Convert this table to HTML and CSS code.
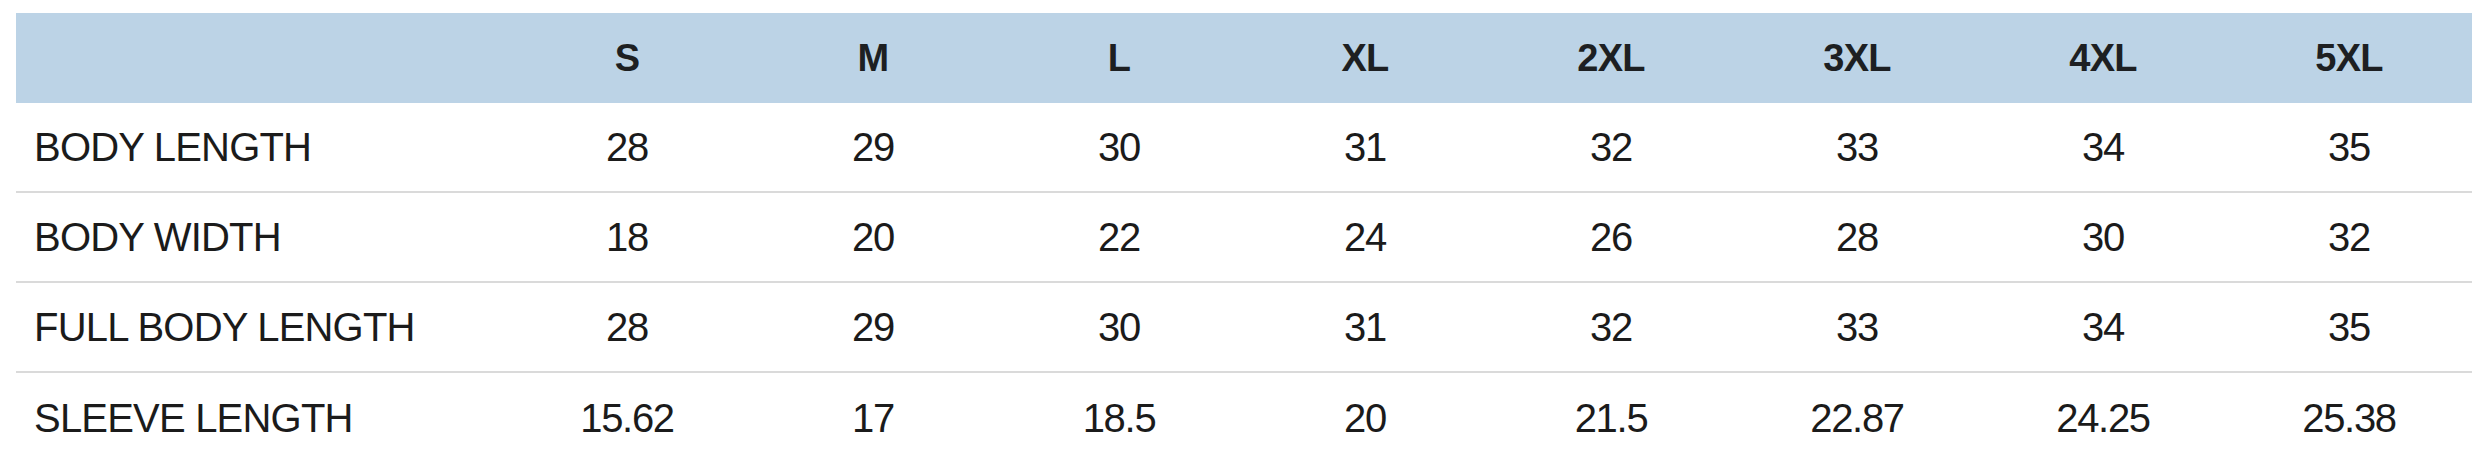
FILE: index.html
```html
<!DOCTYPE html>
<html lang="en">
<head>
<meta charset="utf-8">
<title>Size Chart</title>
<link rel="stylesheet" href="styles.css">
</head>
<body>
<div class="page">
  <table class="size-chart">
    <colgroup>
      <col class="col-label">
      <col class="col-size"><col class="col-size"><col class="col-size"><col class="col-size">
      <col class="col-size"><col class="col-size"><col class="col-size"><col class="col-size">
    </colgroup>
    <thead>
      <tr class="head-row">
        <th class="label"></th>
        <th>S</th><th>M</th><th>L</th><th>XL</th><th>2XL</th><th>3XL</th><th>4XL</th><th>5XL</th>
      </tr>
    </thead>
    <tbody>
      <tr>
        <td class="label">BODY LENGTH</td>
        <td>28</td><td>29</td><td>30</td><td>31</td><td>32</td><td>33</td><td>34</td><td>35</td>
      </tr>
      <tr>
        <td class="label">BODY WIDTH</td>
        <td>18</td><td>20</td><td>22</td><td>24</td><td>26</td><td>28</td><td>30</td><td>32</td>
      </tr>
      <tr>
        <td class="label">FULL BODY LENGTH</td>
        <td>28</td><td>29</td><td>30</td><td>31</td><td>32</td><td>33</td><td>34</td><td>35</td>
      </tr>
      <tr>
        <td class="label">SLEEVE LENGTH</td>
        <td>15.62</td><td>17</td><td>18.5</td><td>20</td><td>21.5</td><td>22.87</td><td>24.25</td><td>25.38</td>
      </tr>
    </tbody>
  </table>
</div>
</body>
</html>
```

FILE: styles.css
```css
html, body {
  margin: 0;
  padding: 0;
  background: #ffffff;
}

.page {
  padding: 13px 0 0 16px;
}

.size-chart {
  border-collapse: collapse;
  table-layout: fixed;
  width: 2456px;
  font-family: "Liberation Sans", Arial, sans-serif;
  color: #1b1b1b;
}

.col-label {
  width: 488px;
}

.col-size {
  width: 246px;
}

.head-row {
  background: #bcd3e6;
}

.size-chart th {
  height: 90px;
  padding: 0;
  font-size: 38px;
  font-weight: bold;
  letter-spacing: -0.8px;
  text-align: center;
  vertical-align: middle;
  color: #1d1f22;
}

.size-chart td {
  height: 88px;
  padding: 0;
  font-size: 40px;
  letter-spacing: -1.3px;
  text-align: center;
  vertical-align: middle;
  border-bottom: 2px solid #dadada;
}

.size-chart tbody tr:last-child td {
  border-bottom: none;
  height: 90px;
}

.size-chart td.label {
  text-align: left;
  padding-left: 18px;
  letter-spacing: -0.8px;
}
```
